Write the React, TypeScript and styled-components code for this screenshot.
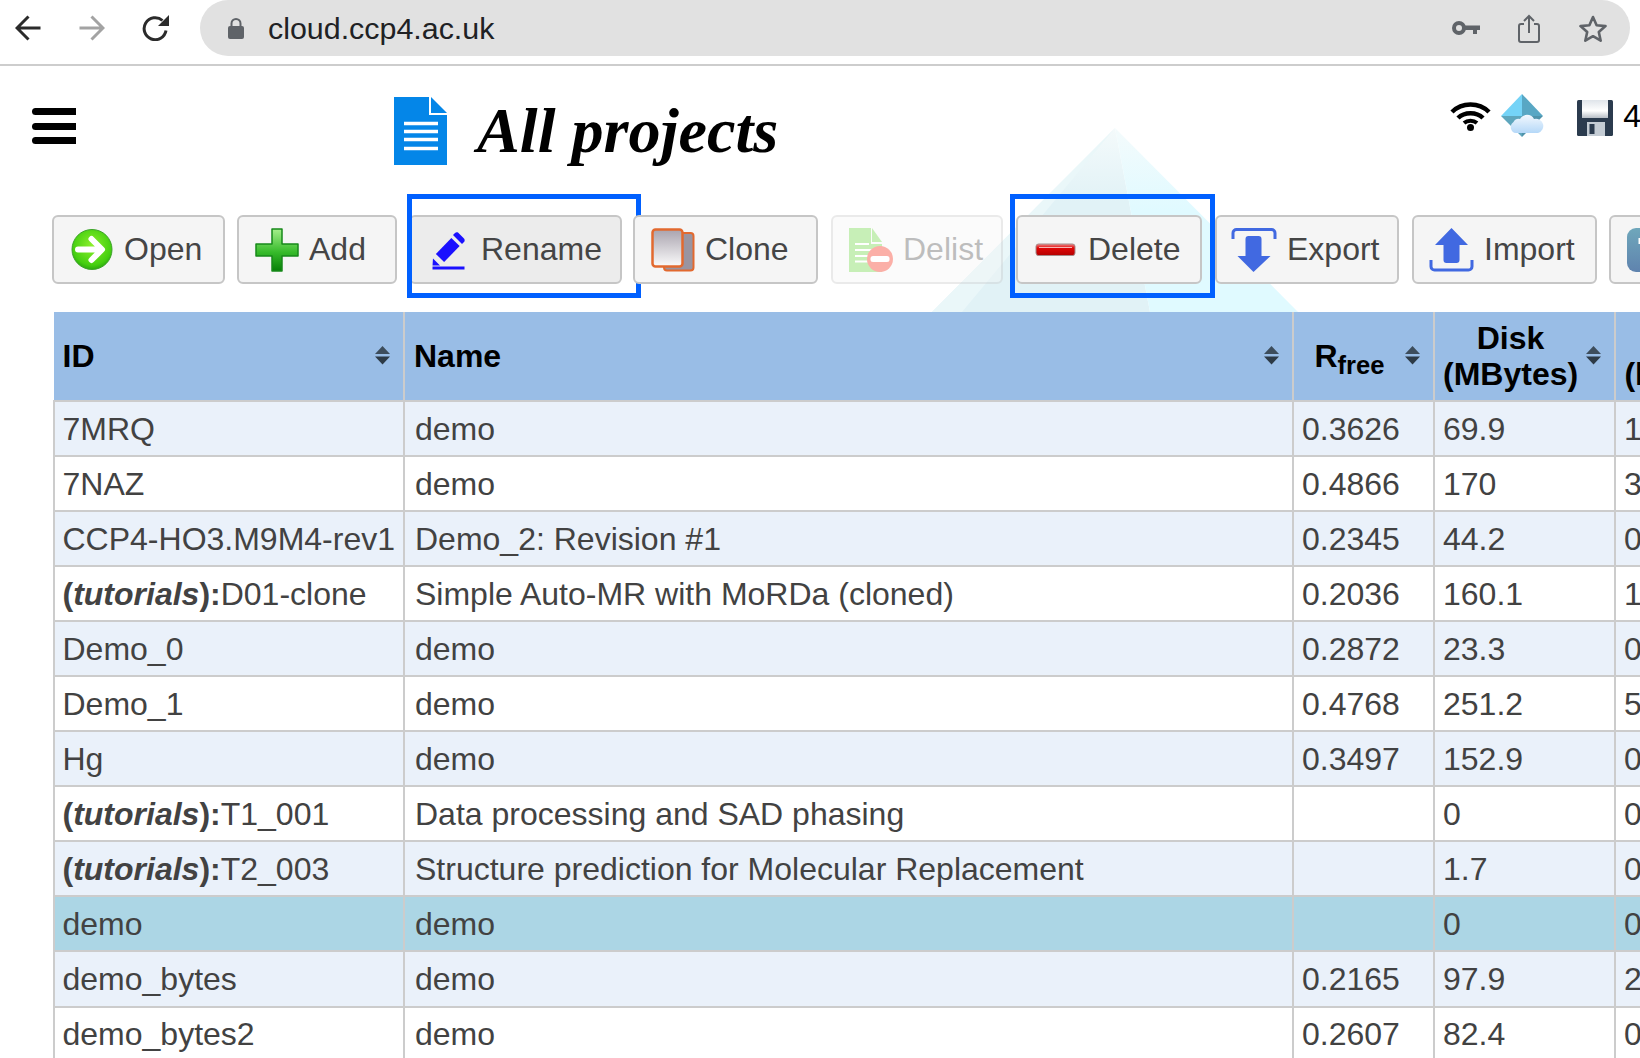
import React from 'react';
import { createGlobalStyle, styled } from 'styled-components';

type Row = {
  id: string;
  name: string;
  rfree: string;
  disk: string;
  cpu: string;
  tutorial?: boolean;
  selected?: boolean;
};

const rows: Row[] = [
  { id: '7MRQ', name: 'demo', rfree: '0.3626', disk: '69.9', cpu: '1' },
  { id: '7NAZ', name: 'demo', rfree: '0.4866', disk: '170', cpu: '3' },
  { id: 'CCP4-HO3.M9M4-rev1', name: 'Demo_2: Revision #1', rfree: '0.2345', disk: '44.2', cpu: '0' },
  { id: 'D01-clone', tutorial: true, name: 'Simple Auto-MR with MoRDa (cloned)', rfree: '0.2036', disk: '160.1', cpu: '1' },
  { id: 'Demo_0', name: 'demo', rfree: '0.2872', disk: '23.3', cpu: '0' },
  { id: 'Demo_1', name: 'demo', rfree: '0.4768', disk: '251.2', cpu: '5' },
  { id: 'Hg', name: 'demo', rfree: '0.3497', disk: '152.9', cpu: '0' },
  { id: 'T1_001', tutorial: true, name: 'Data processing and SAD phasing', rfree: '', disk: '0', cpu: '0' },
  { id: 'T2_003', tutorial: true, name: 'Structure prediction for Molecular Replacement', rfree: '', disk: '1.7', cpu: '0' },
  { id: 'demo', selected: true, name: 'demo', rfree: '', disk: '0', cpu: '0' },
  { id: 'demo_bytes', name: 'demo', rfree: '0.2165', disk: '97.9', cpu: '2' },
  { id: 'demo_bytes2', name: 'demo', rfree: '0.2607', disk: '82.4', cpu: '0' },
];

const OpenIcon = () => (
  <ToolIcon viewBox="0 0 44 44">
    <defs>
      <radialGradient id="openFill" cx="0.5" cy="0.4" r="0.65">
        <stop offset="0" stopColor="#8df02c" />
        <stop offset="0.75" stopColor="#45cf10" />
        <stop offset="1" stopColor="#1f9a0c" />
      </radialGradient>
    </defs>
    <circle cx="22" cy="21.5" r="20" fill="url(#openFill)" stroke="#3da32a" strokeWidth="1" />
    <path d="M8 21.5H31M21.5 11L32 21.5L21.5 32" fill="none" stroke="#fff" strokeWidth="6" strokeLinecap="round" strokeLinejoin="round" />
  </ToolIcon>
);

const AddIcon = () => (
  <ToolIcon viewBox="0 0 44 44">
    <defs>
      <linearGradient id="addFill" x1="0" y1="0" x2="0" y2="1">
        <stop offset="0" stopColor="#a6ef8c" />
        <stop offset="0.55" stopColor="#37bb2b" />
        <stop offset="1" stopColor="#067f06" />
      </linearGradient>
    </defs>
    <path d="M17 1H27V16H43V28H27V43H17V28H1V16H17Z" fill="url(#addFill)" stroke="#17891a" strokeWidth="1.5" strokeLinejoin="round" />
  </ToolIcon>
);

const PencilIcon = () => (
  <ToolIcon viewBox="0 0 44 44">
    <path d="M13 30L28.5 14" fill="none" stroke="#1a10ff" strokeWidth="11.5" />
    <path d="M31 4.5L36.5 10C38 11.5 38 13 37 14L35 16L26 7L28 5C29 4 30 4 31 4.5Z" fill="#1a10ff" />
    <path d="M6 30.5L13 37.5L5.5 37.5Z" fill="#1a10ff" />
    <rect x="5.5" y="38.5" width="32" height="3" fill="#1a10ff" />
  </ToolIcon>
);

const CloneIcon = () => (
  <ToolIcon viewBox="0 0 44 44">
    <defs>
      <linearGradient id="cloneFill" x1="0" y1="0" x2="0" y2="1">
        <stop offset="0" stopColor="#a9a3ae" />
        <stop offset="1" stopColor="#fbfbfb" />
      </linearGradient>
    </defs>
    <rect x="13" y="5" width="29.5" height="37.5" rx="3" fill="#9a94a0" stroke="#e2692f" strokeWidth="2" />
    <rect x="1.5" y="1.5" width="30" height="37" rx="3" fill="url(#cloneFill)" stroke="#e2692f" strokeWidth="2.5" />
  </ToolIcon>
);

const DelistIcon = () => (
  <ToolIcon viewBox="0 0 44 44">
    <path d="M0 0H22V16H33V44H0Z" fill="#62d434" />
    <path d="M23 0L33 14H23Z" fill="#62d434" />
    <path d="M6 16H20M6 22H26M6 28H22M6 33.5H20" stroke="#fff" strokeWidth="2" />
    <circle cx="31" cy="31" r="13" fill="#f41d06" />
    <rect x="21.5" y="28" width="19" height="6" rx="2.5" fill="#fff" />
  </ToolIcon>
);

const DeleteIcon = () => (
  <ToolIcon viewBox="0 0 44 44">
    <defs>
      <linearGradient id="deleteFill" x1="0" y1="0" x2="0" y2="1">
        <stop offset="0" stopColor="#f08a8a" />
        <stop offset="0.35" stopColor="#e00606" />
        <stop offset="1" stopColor="#b30000" />
      </linearGradient>
    </defs>
    <rect x="2" y="16" width="39" height="11.5" rx="2.5" fill="url(#deleteFill)" stroke="#a58b8b" strokeWidth="1" />
    <path d="M5 19.5H38" stroke="#f7b5b5" strokeWidth="1" />
  </ToolIcon>
);

const ExportIcon = () => (
  <ToolIcon viewBox="0 0 44 44">
    <path d="M0 11V5A3.5 3.5 0 0 1 3.5 1.5H38.5A3.5 3.5 0 0 1 42 5V11" fill="none" stroke="#4169e1" strokeWidth="3" />
    <path d="M12.5 28V11A3 3 0 0 1 15.5 8H25.5A3 3 0 0 1 28.5 11V28H37.5L20.5 44L4.5 28Z" fill="#4169e1" />
  </ToolIcon>
);

const ImportIcon = () => (
  <ToolIcon viewBox="0 0 44 44">
    <path d="M21.5 0L38 17H29.5V32A3 3 0 0 1 26.5 35H16.5A3 3 0 0 1 13.5 32V17H5Z" fill="#4169e1" />
    <path d="M1 32V38.5A3.5 3.5 0 0 0 4.5 42H38.5A3.5 3.5 0 0 0 42 38.5V32" fill="none" stroke="#4169e1" strokeWidth="3" />
  </ToolIcon>
);

const NextIcon = () => (
  <ToolIcon viewBox="0 0 44 44">
    <defs>
      <linearGradient id="nextFill" x1="0" y1="0" x2="0" y2="1">
        <stop offset="0" stopColor="#6fa7bb" />
        <stop offset="1" stopColor="#5f83ae" />
      </linearGradient>
    </defs>
    <rect x="0" y="0" width="44" height="44" rx="9" fill="url(#nextFill)" />
    <path d="M13 10V16" stroke="#fff" strokeWidth="3" />
  </ToolIcon>
);

const SortIcon = () => (
  <SortMark viewBox="0 0 15 19">
    <path d="M7.5 0L15 8H0Z" fill="#3d4d5c" />
    <path d="M0 10.5H15L7.5 18.5Z" fill="#2d3a46" />
  </SortMark>
);

export default function App(): React.JSX.Element {
  return (
    <Page>
      <GlobalStyle />
      <Backdrop viewBox="0 0 420 200">
        <defs>
          <linearGradient id="leftFace" x1="0" y1="0" x2="0" y2="1">
            <stop offset="0" stopColor="#f4fafb" />
            <stop offset="0.4" stopColor="#e1f2f6" />
          </linearGradient>
          <linearGradient id="rightFace" x1="0" y1="0" x2="0" y2="1">
            <stop offset="0" stopColor="#f4fbfc" />
            <stop offset="0.45" stopColor="#e0faff" />
          </linearGradient>
        </defs>
        <path d="M215 0L32 184H250Z" fill="url(#leftFace)" />
        <path d="M215 0L398 184H250Z" fill="url(#rightFace)" />
        <path d="M215 0L32 184H62Z" fill="#eaf7f9" />
      </Backdrop>

      <BrowserBar>
        <NavIcon viewBox="0 0 26 26" $left={15}>
          <path d="M25 13H2M13 1.5L1.5 13L13 24.5" fill="none" stroke="#2b2b2b" strokeWidth="3" />
        </NavIcon>
        <NavIcon viewBox="0 0 26 26" $left={36}>
          <path d="M1 13H24M13 1.5L24.5 13L13 24.5" fill="none" stroke="#a3a3a3" strokeWidth="3" />
        </NavIcon>
        <NavIcon viewBox="0 0 27 26" $left={37}>
          <path d="M20.5 5.5A11 11 0 1 0 24 15.5" fill="none" stroke="#2b2b2b" strokeWidth="3" />
          <path d="M27 0V11H16Z" fill="#2b2b2b" />
        </NavIcon>
        <AddressPill>
          <svg width="16" height="21" viewBox="0 0 16 21">
            <rect x="0" y="8" width="16" height="13" rx="2" fill="#5f6368" />
            <path d="M3.5 9V5.5A4.5 4.5 0 0 1 12.5 5.5V9" fill="none" stroke="#5f6368" strokeWidth="2" />
          </svg>
          <AddressText>cloud.ccp4.ac.uk</AddressText>
          <AddressActions>
            <svg width="28" height="14" viewBox="0 0 28 14">
              <circle cx="7" cy="7" r="5" fill="none" stroke="#5f6368" strokeWidth="4" />
              <path d="M11 4.5H28V9H25V13H21V9H11Z" fill="#5f6368" />
            </svg>
            <svg width="22" height="29" viewBox="0 0 22 29">
              <path d="M6 10H3A2 2 0 0 0 1 12V26A2 2 0 0 0 3 28H19A2 2 0 0 0 21 26V12A2 2 0 0 0 19 10H16" fill="none" stroke="#5f6368" strokeWidth="2" />
              <path d="M11 19V2M6 7L11 2L16 7" fill="none" stroke="#5f6368" strokeWidth="2" />
            </svg>
            <svg width="30" height="28" viewBox="0 0 30 28">
              <path d="M15 3L18.6 11.2L27.5 12.1L20.8 18L22.7 26.7L15 22.2L7.3 26.7L9.2 18L2.5 12.1L11.4 11.2Z" fill="none" stroke="#5f6368" strokeWidth="2.6" strokeLinejoin="round" />
            </svg>
          </AddressActions>
        </AddressPill>
      </BrowserBar>

      <Header>
        <MenuButton>
          <MenuBar />
          <MenuBar />
          <MenuBar />
        </MenuButton>
        <DocIcon viewBox="0 0 53 68">
          <path d="M0 0H35V18H53V68H0Z" fill="#0486e8" />
          <path d="M37 0L53 16H37Z" fill="#0486e8" />
          <path d="M10 26.5H44M10 34.5H44M10 42.5H44M10 51.5H44" stroke="#fff" strokeWidth="3.5" />
        </DocIcon>
        <Title>All projects</Title>
        <Status>
          <StatusIcon width="41" height="30" viewBox="0 0 41 30" $top={7}>
            <path d="M2 11C12 1 29 1 39 11" fill="none" stroke="#000" strokeWidth="4.5" />
            <path d="M8 17C14.5 10.5 26.5 10.5 33 17" fill="none" stroke="#000" strokeWidth="4.5" />
            <path d="M14 22C17.5 19 23.5 19 27 22" fill="none" stroke="#000" strokeWidth="4" />
            <circle cx="20.5" cy="26.5" r="3.5" fill="#000" />
          </StatusIcon>
          <StatusIcon width="43" height="43" viewBox="0 0 43 43" $top={0}>
            <defs>
              <linearGradient id="cloudFill" x1="0" y1="0" x2="0" y2="1">
                <stop offset="0" stopColor="#f2f8fe" />
                <stop offset="1" stopColor="#b5d8f8" />
              </linearGradient>
            </defs>
            <path d="M21 0L0 22L21 22Z" fill="#74d3f7" />
            <path d="M21 0L42 22L21 22Z" fill="#58a7c4" />
            <path d="M0 22L21 43L21 22Z" fill="#5ea6bd" />
            <path d="M42 22L21 43L21 22Z" fill="#4f93ab" />
            <path d="M15 39A6 6 0 0 1 12.5 28A6 6 0 0 1 19 25A8 8 0 0 1 33 25A7 7 0 0 1 37 39Z" fill="url(#cloudFill)" />
          </StatusIcon>
          <StatusIcon width="36" height="36" viewBox="0 0 36 36" $top={6} $gap={33}>
            <defs>
              <linearGradient id="floppyLabel" x1="0" y1="0" x2="0" y2="1">
                <stop offset="0" stopColor="#dfe4ea" />
                <stop offset="0.6" stopColor="#ffffff" />
                <stop offset="1" stopColor="#b7bec6" />
              </linearGradient>
            </defs>
            <rect x="0" y="0" width="36" height="36" rx="1.5" fill="#2b3b4e" />
            <rect x="5" y="0" width="26" height="18" fill="url(#floppyLabel)" />
            <rect x="10" y="22" width="18" height="14" fill="#c4ccd4" />
            <rect x="12.5" y="24" width="5" height="10" fill="#2b3b4e" />
          </StatusIcon>
          <StatusCount>4</StatusCount>
        </Status>
      </Header>

      <Toolbar>
        <ToolButton $width={173} $gap={0}><OpenIcon />Open</ToolButton>
        <ToolButton $width={160} $gap={12}><AddIcon />Add</ToolButton>
        <ToolButton $width={213} $gap={12} $active $marked="rename"><PencilIcon />Rename</ToolButton>
        <ToolButton $width={185} $gap={11}><CloneIcon />Clone</ToolButton>
        <ToolButton $width={172} $gap={13} $disabled><DelistIcon />Delist</ToolButton>
        <ToolButton $width={186} $gap={13} $marked="delete"><DeleteIcon />Delete</ToolButton>
        <ToolButton $width={184} $gap={13}><ExportIcon />Export</ToolButton>
        <ToolButton $width={185} $gap={13}><ImportIcon />Import</ToolButton>
        <ToolButton $width={180} $gap={12}><NextIcon /></ToolButton>
      </Toolbar>

      <ProjectTable>
        <colgroup>
          <col width="350.5" />
          <col width="889" />
          <col width="141" />
          <col width="181" />
          <col width="156" />
        </colgroup>
        <thead>
          <tr>
            <HeadCell $left>ID<SortIcon /></HeadCell>
            <HeadCell $left>Name<SortIcon /></HeadCell>
            <HeadCell>R<Sub>free</Sub><SortIcon /></HeadCell>
            <HeadCell>Disk<br />(MBytes)<SortIcon /></HeadCell>
            <HeadCell>CPU<br />(hours)<SortIcon /></HeadCell>
          </tr>
        </thead>
        <tbody>
          {rows.map((row) => (
            <BodyRow key={row.id} $selected={row.selected}>
              <Cell>
                {row.tutorial && <TutorialTag>(<i>tutorials</i>):</TutorialTag>}
                {row.id}
              </Cell>
              <NameCell>{row.name}</NameCell>
              <Cell>{row.rfree}</Cell>
              <Cell>{row.disk}</Cell>
              <Cell>{row.cpu}</Cell>
            </BodyRow>
          ))}
        </tbody>
      </ProjectTable>
    </Page>
  );
}

const GlobalStyle = createGlobalStyle`
  html, body {
    margin: 0;
    padding: 0;
    background: #fff;
    overflow: hidden;
  }
`;

const Page = styled.div`
  position: relative;
  isolation: isolate;
  width: 1640px;
  height: 1058px;
  overflow: hidden;
  background: #fff;
  font-family: "Liberation Sans", Arial, sans-serif;
`;

const Backdrop = styled.svg`
  position: absolute;
  left: 900px;
  top: 128px;
  width: 420px;
  height: 200px;
  z-index: -1;
`;

const BrowserBar = styled.div`
  display: flex;
  align-items: flex-start;
  height: 64px;
  border-bottom: 2px solid #cdcdcd;
`;

const NavIcon = styled.svg<{ $left: number }>`
  width: 27px;
  height: 26px;
  margin-top: 15px;
  margin-left: ${({ $left }) => $left}px;
  flex-shrink: 0;
`;

const AddressPill = styled.div`
  display: flex;
  align-items: center;
  margin-left: 31px;
  width: 1430px;
  height: 56px;
  padding: 0 22px 0 28px;
  box-sizing: border-box;
  border-radius: 28px;
  background: #e1e1e1;
`;

const AddressText = styled.span`
  margin-left: 24px;
  font-size: 30.4px;
  color: #202124;
`;

const AddressActions = styled.div`
  display: flex;
  align-items: center;
  gap: 38px;
  margin-left: auto;
`;

const Header = styled.header`
  display: flex;
  align-items: flex-start;
  height: 149px;
  padding: 31px 0 0 32px;
  box-sizing: border-box;
`;

const MenuButton = styled.div`
  display: flex;
  flex-direction: column;
  gap: 7.5px;
  width: 44px;
  margin-top: 11px;
`;

const MenuBar = styled.span`
  display: block;
  height: 7px;
  border-radius: 4px 0 0 4px;
  background: #000;
`;

const DocIcon = styled.svg`
  width: 53px;
  height: 68px;
  margin-left: 318px;
  flex-shrink: 0;
`;

const Title = styled.h1`
  margin: 0 0 0 30px;
  font-family: "Liberation Serif", "Times New Roman", serif;
  font-size: 64.2px;
  line-height: 68px;
  font-style: italic;
  font-weight: bold;
  color: #000;
`;

const Status = styled.div`
  display: flex;
  align-items: flex-start;
  margin: -3px -1px 0 auto;
`;

const StatusIcon = styled.svg<{ $top: number; $gap?: number }>`
  margin-top: ${({ $top }) => $top}px;
  margin-left: ${({ $gap }) => $gap ?? 10}px;
  flex-shrink: 0;
`;

const StatusCount = styled.span`
  margin: 4px 0 0 10px;
  font-size: 32px;
  line-height: 36px;
  color: #000;
`;

const Toolbar = styled.div`
  display: flex;
  width: max-content;
  padding-left: 52px;
`;

const ToolIcon = styled.svg`
  width: 44px;
  height: 44px;
  margin-right: 10px;
  flex-shrink: 0;
  overflow: visible;
`;

const ToolButton = styled.div<{
  $width: number;
  $gap: number;
  $active?: boolean;
  $disabled?: boolean;
  $marked?: 'rename' | 'delete';
}>`
  position: relative;
  display: flex;
  align-items: center;
  width: ${({ $width }) => $width}px;
  height: 69px;
  margin-left: ${({ $gap }) => $gap}px;
  padding: 0 0 0 16px;
  box-sizing: border-box;
  border: 2px solid #c6c6c6;
  border-radius: 6px;
  background: ${({ $active }) => ($active ? '#ececec' : '#f5f5f5')};
  font-size: 32px;
  color: #454545;
  opacity: ${({ $disabled }) => ($disabled ? 0.35 : 1)};

  ${({ $marked }) =>
    $marked &&
    `
    &::after {
      content: '';
      position: absolute;
      top: -23px;
      bottom: -16px;
      left: ${$marked === 'rename' ? -4 : -8}px;
      right: ${$marked === 'rename' ? -21 : -15}px;
      border: 5px solid #0060ff;
    }
  `}
`;

const ProjectTable = styled.table`
  margin: 28px 0 0 52.5px;
  width: 1717.5px;
  table-layout: fixed;
  border-collapse: collapse;
  font-size: 32px;
`;

const HeadCell = styled.th<{ $left?: boolean }>`
  position: relative;
  height: 88px;
  padding: 0 ${({ $left }) => ($left ? '8px 0 9px' : '36px 0 8px')};
  border-left: 2px solid #ccc;
  border-bottom: 2px solid #ccc;
  background: #99bde6;
  color: #000;
  line-height: 36px;
  text-align: ${({ $left }) => ($left ? 'left' : 'center')};
  font-weight: bold;

  &:first-child {
    border-left: none;
  }
`;

const Sub = styled.sub`
  font-size: 25.6px;
  line-height: 0;
`;

const SortMark = styled.svg`
  position: absolute;
  right: 13px;
  top: 50%;
  width: 15px;
  height: 19px;
  margin-top: -10px;
`;

const BodyRow = styled.tr<{ $selected?: boolean }>`
  height: 55.06px;
  background: ${({ $selected }) => ($selected ? '#acd6e5' : '#fff')};

  &:nth-child(odd) {
    background: ${({ $selected }) => ($selected ? '#acd6e5' : '#eaf1fa')};
  }
`;

const Cell = styled.td`
  padding: 1px 8px 0;
  border: 2px solid #ccc;
  color: #424242;
  white-space: nowrap;
  overflow: hidden;
`;

const NameCell = styled(Cell)`
  padding-left: 10px;
`;

const TutorialTag = styled.b`
  font-weight: bold;
`;
